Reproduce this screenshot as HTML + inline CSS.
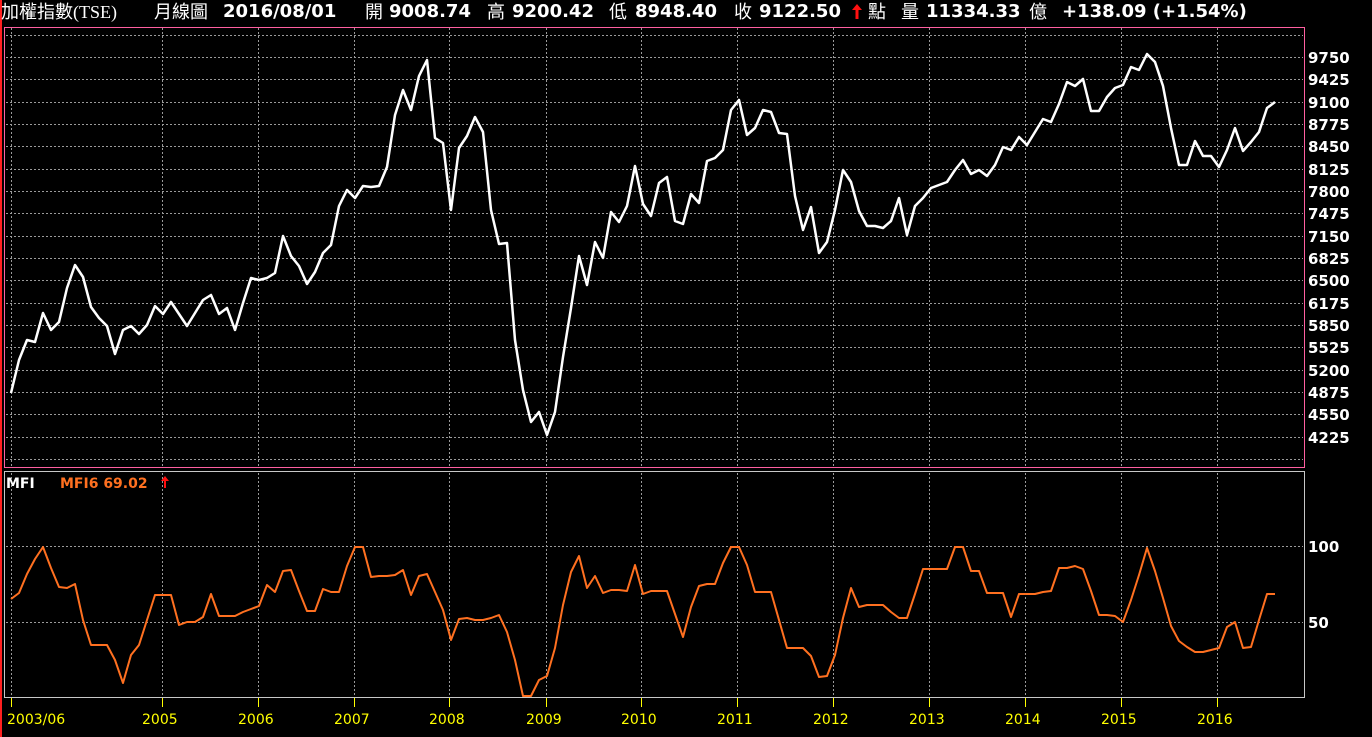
<!DOCTYPE html>
<html><head><meta charset="utf-8"><style>
body{margin:0;background:#000;width:1372px;height:737px;overflow:hidden;position:relative;font-family:"DejaVu Sans","Noto Sans CJK TC",sans-serif}
.h{position:absolute;top:0px;line-height:24px;color:#fff;font-size:18px;font-weight:bold;white-space:nowrap;font-family:"DejaVu Sans",sans-serif}
.c{font-weight:normal;font-size:18px;font-family:"Liberation Serif","Noto Sans CJK TC",sans-serif}
svg{position:absolute;left:0;top:0}
</style></head><body>
<svg width="1372" height="737" xmlns="http://www.w3.org/2000/svg">
<rect x="0" y="0" width="2" height="737" fill="#ff2020"/>
<g stroke="#9a9a9a" stroke-width="1" stroke-dasharray="2,2">
<path d="M6 35.5H1303M6 57.5H1303M6 79.5H1303M6 102.5H1303M6 124.5H1303M6 146.5H1303M6 169.5H1303M6 191.5H1303M6 213.5H1303M6 236.5H1303M6 258.5H1303M6 280.5H1303M6 303.5H1303M6 325.5H1303M6 347.5H1303M6 370.5H1303M6 392.5H1303M6 414.5H1303M6 437.5H1303M6 459.5H1303M6 546.5H1303M6 622.5H1303"/>
<path d="M11.5 28V467M162.5 28V467M258.5 28V467M354.5 28V467M449.5 28V467M546.5 28V467M641.5 28V467M737.5 28V467M833.5 28V467M929.5 28V467M1025.5 28V467M1121.5 28V467M1217.5 28V467"/>
<path d="M11.5 473V697M162.5 473V697M258.5 473V697M354.5 473V697M449.5 473V697M546.5 473V697M641.5 473V697M737.5 473V697M833.5 473V697M929.5 473V697M1025.5 473V697M1121.5 473V697M1217.5 473V697"/>
</g>
<rect x="4.5" y="27.5" width="1300" height="440" fill="none" stroke="#ff5fa0" stroke-width="1"/>
<rect x="4.5" y="471.5" width="1300" height="226" fill="none" stroke="#c8c8c8" stroke-width="1"/>
<polyline fill="none" stroke="#fff" stroke-width="2.5" stroke-linejoin="round" points="11,393 19,360 27,340 35,342 43,313 51,330 59,322 67,288 75,265 83,277 91,307 99,318 107,326 115,354 123,330 131,326 139,334 147,325 155,306 163,314 171,302 179,314 187,326 195,313 203,300 211,295 219,314 227,308 235,330 243,303 251,278 259,280 267,278 275,273 283,236 291,256 299,266 307,284 315,272 323,253 331,245 339,206 347,190 355,198 363,186 371,187 379,186 387,167 395,115 403,90 411,110 419,76 427,60 435,138 443,143 451,210 459,148 467,136 475,117 483,132 491,210 499,244 507,243 515,340 523,390 531,422 539,412 547,435 555,412 563,357 571,308 579,256 587,285 595,242 603,258 611,212 619,222 627,206 635,166 643,204 651,216 659,183 667,177 675,221 683,224 691,194 699,203 707,161 715,158 723,150 731,110 739,100 747,135 755,128 763,110 771,112 779,133 787,134 795,196 803,230 811,207 819,253 827,242 835,210 843,170 851,182 859,211 867,226 875,226 883,228 891,221 899,198 907,235 915,206 923,198 931,188 939,185 947,182 955,170 963,160 971,174 979,170 987,176 995,165 1003,147 1011,150 1019,137 1027,145 1035,132 1043,119 1051,122 1059,104 1067,82 1075,86 1083,79 1091,111 1099,111 1107,97 1115,88 1123,85 1131,67 1139,70 1147,54 1155,62 1163,86 1171,128 1179,165 1187,165 1195,141 1203,156 1211,156 1219,167 1227,150 1235,128 1243,151 1251,142 1259,132 1267,108 1275,102"/>
<polyline fill="none" stroke="#ff7020" stroke-width="2" stroke-linejoin="round" points="11,599 19,593 27,574 35,559 43,547 51,568 59,587 67,588 75,584 83,620 91,645 99,645 107,645 115,660 123,683 131,655 139,645 147,620 155,595 163,595 171,595 179,625 187,622 195,622 203,617 211,594 219,616 227,616 235,616 243,612 251,609 259,606 267,585 275,592 283,571 291,570 299,591 307,611 315,611 323,589 331,592 339,592 347,566 355,547 363,547 371,577 379,576 387,576 395,575 403,570 411,595 419,576 427,574 435,592 443,610 451,640 459,619 467,618 475,620 483,620 491,618 499,615 507,632 515,660 523,696 531,696 539,680 547,676 555,648 563,605 571,572 579,556 587,588 595,576 603,593 611,590 619,590 627,591 635,565 643,594 651,591 659,591 667,591 675,614 683,637 691,607 699,586 707,584 715,584 723,563 731,547 739,547 747,565 755,592 763,592 771,592 779,620 787,648 795,648 803,648 811,656 819,677 827,676 835,655 843,618 851,588 859,607 867,605 875,605 883,605 891,612 899,618 907,618 915,594 923,569 931,569 939,569 947,569 955,547 963,547 971,571 979,571 987,593 995,593 1003,593 1011,617 1019,594 1027,594 1035,594 1043,592 1051,591 1059,568 1067,568 1075,566 1083,569 1091,591 1099,615 1107,615 1115,616 1123,622 1131,600 1139,575 1147,548 1155,571 1163,598 1171,626 1179,641 1187,647 1195,652 1203,652 1211,650 1219,648 1227,627 1235,622 1243,648 1251,647 1259,620 1267,594 1275,594"/>
<g fill="#fff" font-family="DejaVu Sans" font-weight="bold" font-size="15">
<text x="1308" y="63">9750</text><text x="1308" y="85">9425</text><text x="1308" y="108">9100</text><text x="1308" y="130">8775</text><text x="1308" y="152">8450</text><text x="1308" y="175">8125</text><text x="1308" y="197">7800</text><text x="1308" y="219">7475</text><text x="1308" y="242">7150</text><text x="1308" y="264">6825</text><text x="1308" y="286">6500</text><text x="1308" y="309">6175</text><text x="1308" y="331">5850</text><text x="1308" y="353">5525</text><text x="1308" y="376">5200</text><text x="1308" y="398">4875</text><text x="1308" y="420">4550</text><text x="1308" y="443">4225</text>
<text x="1308" y="552">100</text><text x="1308" y="628">50</text>
<text x="6" y="488" font-size="14">MFI</text>
<text x="60" y="488" font-size="14" fill="#ff7020">MFI6 69.02</text>
</g>
<path d="M165 476l-4 5h3v7h2v-7h3z" fill="#ff1010"/>
<g stroke="#ffff00" stroke-width="1"><path d="M11.5 698V707M162.5 698V707M258.5 698V707M354.5 698V707M449.5 698V707M546.5 698V707M641.5 698V707M737.5 698V707M833.5 698V707M929.5 698V707M1025.5 698V707M1121.5 698V707M1217.5 698V707"/></g>
<g fill="#ffff00" font-family="DejaVu Sans" font-size="14">
<text x="7" y="724">2003/06</text><text x="142" y="724">2005</text><text x="238" y="724">2006</text><text x="334" y="724">2007</text><text x="429" y="724">2008</text><text x="526" y="724">2009</text><text x="621" y="724">2010</text><text x="717" y="724">2011</text><text x="813" y="724">2012</text><text x="909" y="724">2013</text><text x="1005" y="724">2014</text><text x="1101" y="724">2015</text><text x="1197" y="724">2016</text>
</g>
<path d="M857 4l-5 6h3.5v9h3v-9h3.5z" fill="#ff1010"/>
</svg>
<div class="h c" style="left:1px">加權指數(TSE)</div>
<div class="h c" style="left:154px">月線圖</div>
<div class="h" style="left:223px">2016/08/01</div>
<div class="h c" style="left:365px">開</div><div class="h" style="left:389px">9008.74</div>
<div class="h c" style="left:487px">高</div><div class="h" style="left:512px">9200.42</div>
<div class="h c" style="left:609px">低</div><div class="h" style="left:635px">8948.40</div>
<div class="h c" style="left:734px">收</div><div class="h" style="left:759px">9122.50</div>
<div class="h c" style="left:868px">點</div>
<div class="h c" style="left:901px">量</div><div class="h" style="left:926px">11334.33</div>
<div class="h c" style="left:1029px">億</div>
<div class="h" style="left:1062px">+138.09 (+1.54%)</div>
</body></html>
